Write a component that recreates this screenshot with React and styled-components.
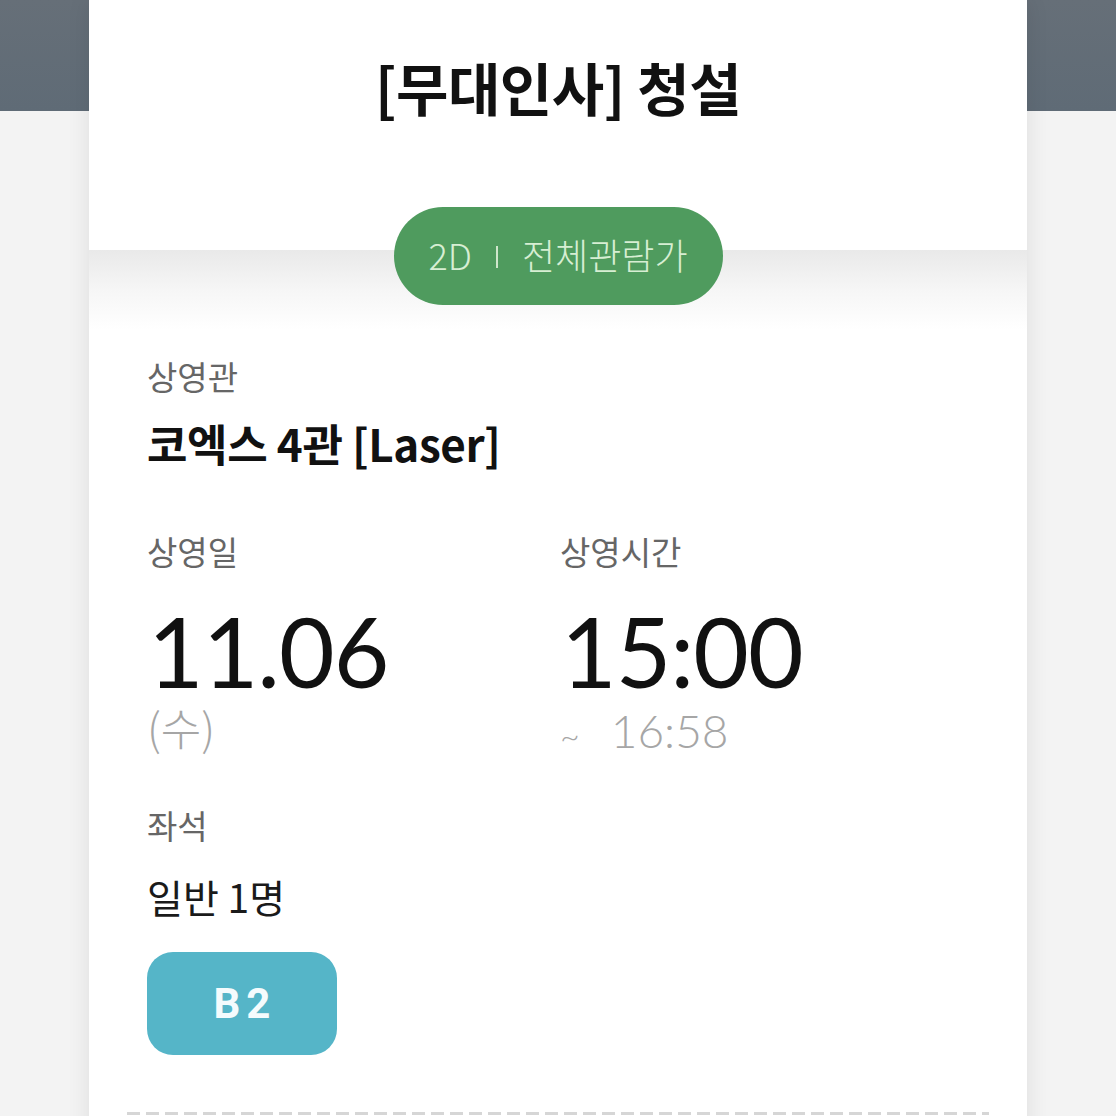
import React from "react";
import styled, { createGlobalStyle } from "styled-components";

const Global = createGlobalStyle`
  html, body { margin: 0; padding: 0; }
  body {
    width: 1116px; height: 1116px; overflow: hidden;
    font-family: "Noto Sans CJK KR", "Noto Sans", sans-serif;
  }
`;

const Page = styled.div`
  width: 1116px;
  height: 1116px;
  overflow: hidden;
  background: linear-gradient(to bottom, #666f78 0, #5f6b76 111px, #f3f3f3 111px, #f3f3f3 100%);
`;

const Card = styled.div`
  width: 938px;
  margin: 0 auto;
  min-height: 1200px;
  background: #fff;
  box-shadow: 0 0 22px rgba(0, 0, 0, 0.09);
`;

const Header = styled.header`
  height: 250px;
  box-sizing: border-box;
  padding-top: 58px;
  text-align: center;
  background: #fff;
`;

const Title = styled.h1`
  margin: 0;
  font-size: 57px;
  line-height: 1;
  font-weight: 700;
  color: #111;
  letter-spacing: -0.5px;
`;

const Body = styled.section`
  background: linear-gradient(to bottom, #e9e9e9 0, #f6f6f6 40px, #ffffff 80px);
  padding: 0 58px;
  display: flex;
  flex-direction: column;
`;

const BadgeRow = styled.div`
  display: flex;
  justify-content: center;
  margin-top: -43px;
`;

const Badge = styled.div`
  width: 329px;
  height: 98px;
  border-radius: 49px;
  background: #4f9b5e;
  display: flex;
  align-items: center;
  justify-content: center;
  gap: 24px;
  color: #d7eed3;
  font-size: 36px;
  font-weight: 300;
  padding-bottom: 4px;
  box-sizing: border-box;
`;

const Sep = styled.span`
  width: 2px;
  height: 22px;
  background: #cfe6cb;
  margin-top: 6px;
`;

const Label = styled.div`
  font-size: 33px;
  line-height: 1;
  color: #666;
  margin-top: ${(p) => p.$mt || 0}px;
`;

const Venue = styled.div`
  font-size: 44px;
  font-weight: 700;
  line-height: 1;
  color: #111;
  margin-top: 28px;
  letter-spacing: -0.4px;
`;

const Columns = styled.div`
  display: grid;
  grid-template-columns: 413px 1fr;
  margin-top: 70px;
`;

const Col = styled.div`
  display: flex;
  flex-direction: column;
`;

const BigNum = styled.div`
  font-family: Lato, "Noto Sans", sans-serif;
  font-size: 96px;
  line-height: 86px;
  font-weight: 400;
  color: #111;
  margin-top: 40px;
  margin-left: 1px;
  letter-spacing: -1px;
`;

const Sub = styled.div`
  font-family: ${(p) => (p.$korean ? '"Noto Sans CJK KR", sans-serif' : 'Lato, "Noto Sans", sans-serif')};
  font-size: ${(p) => p.$size}px;
  font-weight: 300;
  line-height: 1.2;
  color: #a6a6a6;
  margin-top: ${(p) => p.$mt}px;
  display: flex;
  align-items: baseline;
`;

const Tilde = styled.span`
  font-size: 34px;
  margin-right: 31px;
`;

const Seats = styled.div`
  font-size: 39px;
  line-height: 1;
  color: #1a1a1a;
  margin-top: 35px;
`;

const SeatChip = styled.div`
  margin-top: 36px;
  width: 190px;
  height: 103px;
  border-radius: 26px;
  background: #55b5c8;
  color: #f4fbfd;
  display: flex;
  align-items: center;
  justify-content: center;
  font-family: Roboto, "Noto Sans", sans-serif;
  font-weight: 700;
  font-size: 42px;
  letter-spacing: 6px;
  padding-left: 6px;
  box-sizing: border-box;
`;

const TearLine = styled.div`
  margin: 57px -20px 0 -20px;
  height: 3px;
  background-image: repeating-linear-gradient(to right, #d6d6d6 0 13px, transparent 13px 19px);
`;

export default function App() {
  return (
    <Page>
      <Global />
      <Card>
        <Header>
          <Title>[무대인사] 청설</Title>
        </Header>
        <Body>
          <BadgeRow>
            <Badge>
              <span>2D</span>
              <Sep />
              <span>전체관람가</span>
            </Badge>
          </BadgeRow>
          <Label $mt={55}>상영관</Label>
          <Venue>코엑스 4관 [Laser]</Venue>
          <Columns>
            <Col>
              <Label>상영일</Label>
              <BigNum>11.06</BigNum>
              <Sub $korean $size={44} $mt={7}>(수)</Sub>
            </Col>
            <Col>
              <Label>상영시간</Label>
              <BigNum>15:00</BigNum>
              <Sub $size={46} $mt={9}>
                <Tilde>~</Tilde>16:58
              </Sub>
            </Col>
          </Columns>
          <Label $mt={51}>좌석</Label>
          <Seats>일반 1명</Seats>
          <SeatChip>B2</SeatChip>
          <TearLine />
        </Body>
      </Card>
    </Page>
  );
}
